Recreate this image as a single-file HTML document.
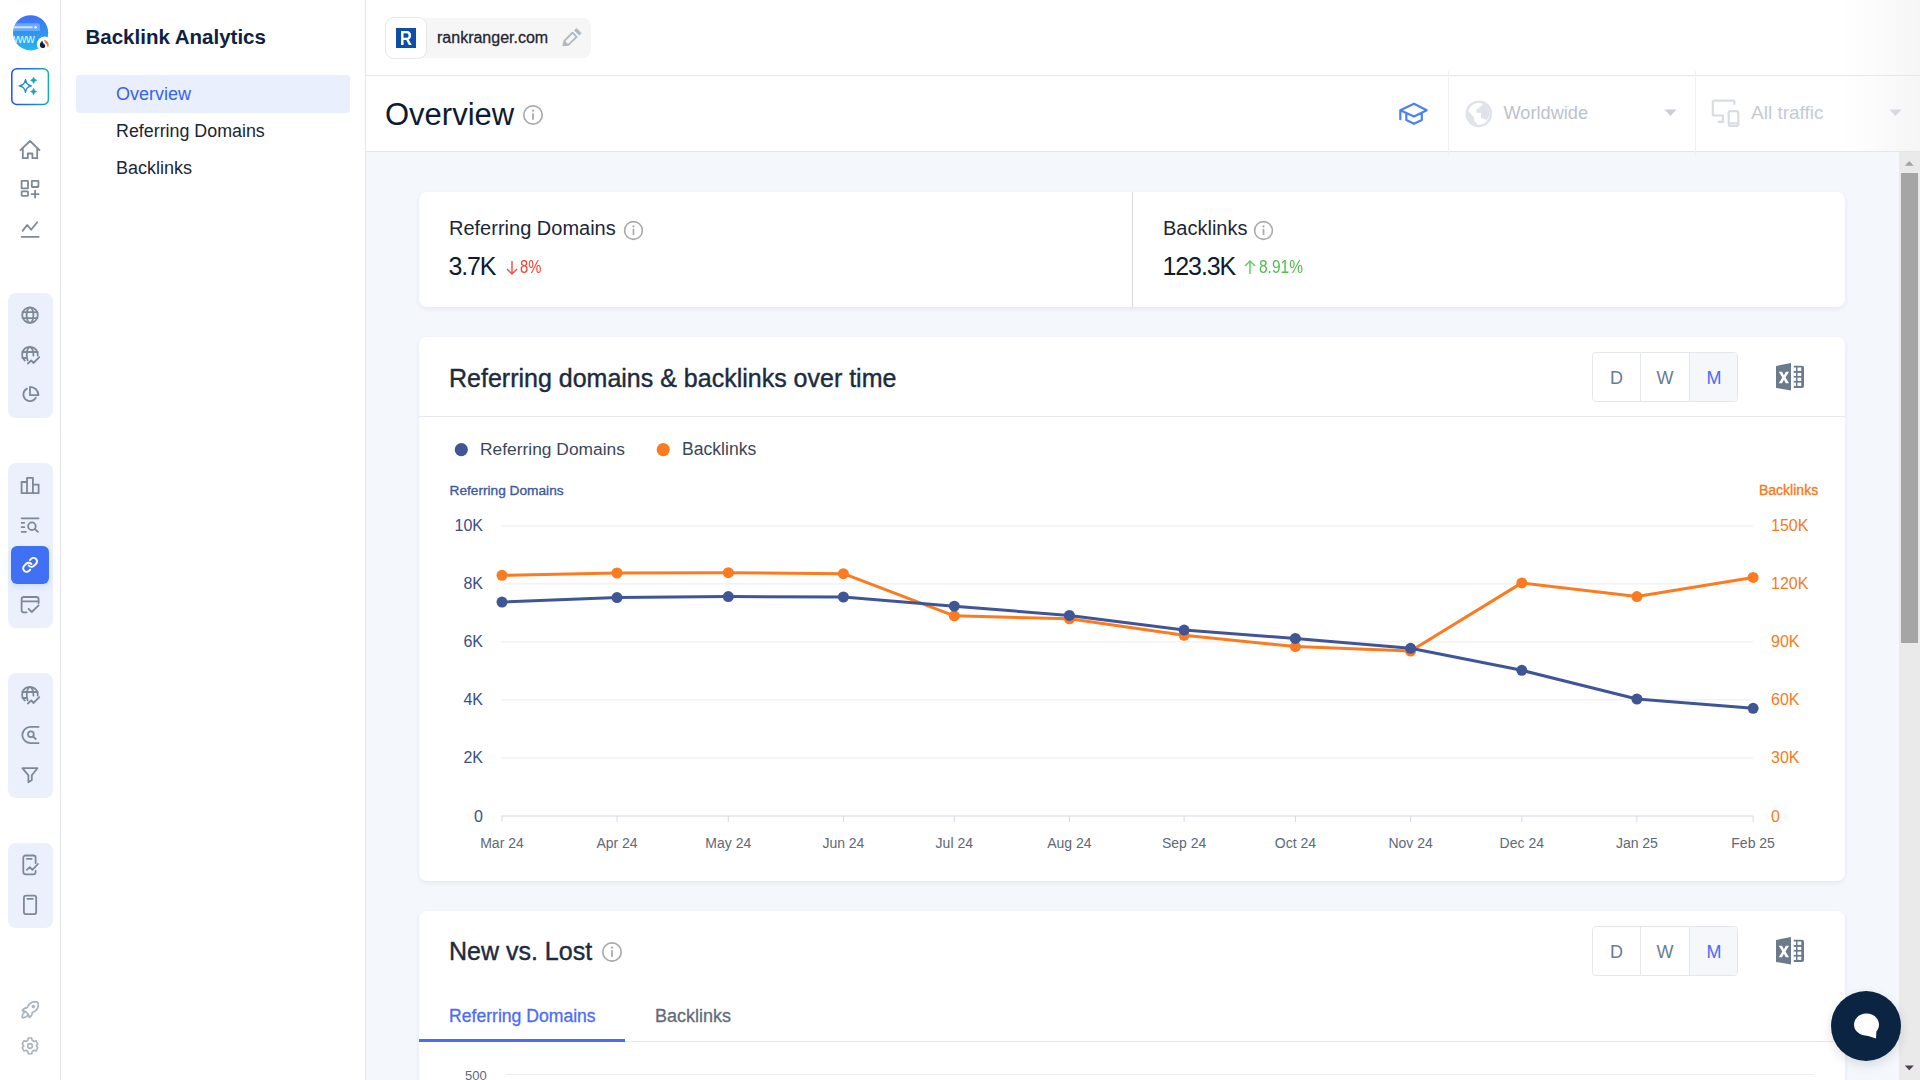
<!DOCTYPE html>
<html><head><meta charset="utf-8">
<style>
*{box-sizing:border-box;margin:0;padding:0}
html,body{width:1920px;height:1080px;overflow:hidden;background:#fff;font-family:"Liberation Sans",sans-serif;}
.abs{position:absolute}
#rail{position:absolute;left:0;top:0;width:61px;height:1080px;background:#fff;border-right:1px solid #e3e6eb}
#subnav{position:absolute;left:61px;top:0;width:305px;height:1080px;background:#fff;border-right:1px solid #e3e6eb}
#hdr{position:absolute;left:366px;top:0;width:1554px;height:76px;background:#fff;border-bottom:1px solid #e3e6eb}
#bar{position:absolute;left:366px;top:76px;width:1554px;height:76px;background:#fff;border-bottom:1px solid #e3e6eb}
#content{position:absolute;left:366px;top:152px;width:1554px;height:928px;background:#f4f7fc}
.card{position:absolute;background:#fff;border-radius:8px;box-shadow:0 2px 5px rgba(30,50,110,0.08)}
.grp{position:absolute;left:8px;width:45px;background:#ebf0fc;border-radius:8px}
.ic{position:absolute;left:20px;width:20px;height:20px}
.t{position:absolute;white-space:nowrap}
</style></head>
<body>
<div id="rail"></div>
<div id="subnav"></div>
<div id="hdr"></div>
<div id="bar"></div>
<div id="content"></div>

<div class="abs" style="left:1840px;top:0;width:80px;height:151px;background:linear-gradient(90deg,rgba(235,235,235,0) 0%,rgba(235,235,235,0.45) 100%)"></div>
<!-- rail groups -->
<div class="grp" style="top:293px;height:125px"></div>
<div class="grp" style="top:463px;height:165px"></div>
<div class="grp" style="top:673px;height:125px"></div>
<div class="grp" style="top:843px;height:85px"></div>
<div class="abs" style="left:11px;top:546px;width:38px;height:38px;background:#4071f4;border-radius:6px;box-shadow:0 3px 6px rgba(64,113,244,0.15)"></div>

<!--RAIL-->
<svg class="abs" style="left:0;top:0" width="61" height="1080">
<defs>
<linearGradient id="avg" x1="0" y1="0" x2="0" y2="1"><stop offset="0" stop-color="#4070f6"/><stop offset="1" stop-color="#20b9ea"/></linearGradient>
<linearGradient id="aib" x1="0" y1="0" x2="1" y2="0"><stop offset="0" stop-color="#1e4dff"/><stop offset="1" stop-color="#12aeb0"/></linearGradient>
</defs>
<!-- avatar -->
<clipPath id="avc"><circle cx="30.6" cy="32.8" r="17.6"/></clipPath>
<circle cx="30.6" cy="32.8" r="17.6" fill="url(#avg)"/>
<g clip-path="url(#avc)">
<path d="M10 31 V25.5 a2.2 2.2 0 0 1 2.2 -2.2 H37.7 a2.2 2.2 0 0 1 2.2 2.2 V31 Z" fill="#9ccaff" opacity="0.5"/>
<rect x="13" y="26.3" width="20" height="2" rx="1" fill="#eef5ff" opacity="0.75"/>
<circle cx="35.6" cy="27.2" r="1.3" fill="#fff" opacity="0.9"/>
<text x="9.5" y="43" font-size="12" fill="#e6f4ff" font-family="Liberation Sans" letter-spacing="-0.4">www</text>
</g>
<circle cx="44.5" cy="44.3" r="7.7" fill="#fff" style="filter:drop-shadow(0 0.5px 1px rgba(0,0,0,0.12))"/>
<path d="M42.3 40.5 c-1.6 1.4 -2.8 3.3 -2.3 5.4 c0.5 2 3.2 2.6 4.6 1.5 c1.1 -0.9 0.8 -2.3 -0.2 -3.2 c-1.2 -1.1 -2 -1.9 -2.1 -3.7z" fill="#0e2340"/>
<path d="M44 39.8 c2 0.3 3.9 1.7 4.5 3.7 c0.5 1.7 0 3.4 -1 4.3 c0.2 -1.4 -0.3 -2.8 -1.3 -4 c-0.8 -0.9 -2 -2 -2.2 -4z" fill="#fb7a1e"/>
<!-- AI button -->
<rect x="11.8" y="68.8" width="36.6" height="35.6" rx="5" fill="#fff" stroke="url(#aib)" stroke-width="1.5"/>
<path d="M25.5 79.6 Q26.3 85.1 31.3 85.9 Q26.3 86.7 25.5 92.2 Q24.7 86.7 19.2 85.9 Q24.7 85.1 25.5 79.6Z" fill="none" stroke="#1a8ad0" stroke-width="1.4" stroke-linejoin="round"/>
<path d="M33.6 77.2 Q34 79.9 36.6 80.3 Q34 80.7 33.6 83.4 Q33.2 80.7 30.6 80.3 Q33.2 79.9 33.6 77.2Z" fill="#14a6b4" stroke="#14a6b4" stroke-width="0.8" stroke-linejoin="round"/>
<path d="M33.6 88.5 Q34 91.2 36.6 91.6 Q34 92 33.6 94.7 Q33.2 92 30.6 91.6 Q33.2 91.2 33.6 88.5Z" fill="#14a6b4" stroke="#14a6b4" stroke-width="0.8" stroke-linejoin="round"/>
<g fill="none" stroke="#7d8995" stroke-width="1.8" stroke-linecap="round" stroke-linejoin="round">
<!-- home -->
<path d="M20.5 150.2 L30 141 L39.5 150.2 M22.8 148 V158.2 H27.8 V153.5 H32.4 V158.2 H37.2 V148"/>
<!-- grid plus -->
<rect x="21.6" y="180.8" width="6.4" height="7.6" rx="0.5"/>
<rect x="31.8" y="180.8" width="6.6" height="6.2" rx="0.5"/>
<rect x="21.6" y="191.4" width="6.4" height="4.4" rx="0.5"/>
<path d="M35.1 190.6 V197.6 M31.6 194.2 H38.6"/>
<!-- line chart -->
<path d="M22.6 230.9 L27.2 225 L31.1 229.7 L37.2 222.2 M21.6 236.9 H38.6"/>
<!-- globe -->
<circle cx="30" cy="315.1" r="7.8"/>
<ellipse cx="30" cy="315.1" rx="3.4" ry="7.8"/>
<path d="M22.6 312.2 H37.4 M22.6 318.1 H37.4"/>
<!-- globe trend -->
<path d="M24.8 360.5 A7.8 7.8 0 1 1 37.7 355.6"/>
<path d="M30 347.2 A3.4 7.8 0 0 0 27.6 360.3 M30 347.2 A3.4 7.8 0 0 1 33.4 355.6 M22.4 352 H37.6 M22.4 358 H26.6"/>
<path d="M27.9 363.5 L31.3 360.4 L33.4 363 L39.3 357.2"/>
<!-- pie -->
<path d="M27 388.6 A6.6 6.6 0 1 0 35.8 397.6"/>
<path d="M30 386.8 V395.2 H38.4 A8.4 8.4 0 0 0 30 386.8 Z"/>
<!-- bar chart -->
<path d="M21.6 493.2 V482 H27 V493.2 M27 493.2 V477.8 H32.9 V493.2 M32.9 484.6 H38.6 V493.2 H21.6"/>
<!-- list search -->
<path d="M21.6 518.3 H38.6 M21.6 522.8 H24.2 M21.6 527.2 H24.2 M21.6 531.8 H26"/>
<circle cx="31.9" cy="526.2" r="3.8"/>
<path d="M34.8 529 L38 531.9"/>
<!-- calendar check -->
<path d="M26.6 612.4 H23.8 A2.2 2.2 0 0 1 21.6 610.2 V599.2 A2.2 2.2 0 0 1 23.8 597 H36.4 A2.2 2.2 0 0 1 38.6 599.2 V603.2 M21.6 601.3 H38.6 M28.6 608.8 L31.8 612 L38.6 605.4"/>
<!-- globe trend 2 -->
<path d="M24.8 700.5 A7.8 7.8 0 1 1 37.7 695.6"/>
<path d="M30 687.2 A3.4 7.8 0 0 0 27.6 700.3 M30 687.2 A3.4 7.8 0 0 1 33.4 695.6 M22.4 692 H37.6 M22.4 698 H26.6"/>
<path d="M27.9 703.5 L31.3 700.4 L33.4 703 L39.3 697.2"/>
<!-- search C -->
<path d="M38.6 726.9 H30.4 A8.1 8.1 0 0 0 30.4 743.1 H38.6"/>
<circle cx="30.9" cy="734.3" r="2.9"/>
<path d="M33 736.5 L35.8 739"/>
<!-- funnel -->
<path d="M22.4 768.2 H37.4 L31.8 775.3 V780 L28.4 782.3 V775.3 Z"/>
<!-- phone chart -->
<path d="M35.6 863 V857.7 A2.2 2.2 0 0 0 33.4 855.5 H25.5 A2.2 2.2 0 0 0 23.3 857.7 V872.1 A2.2 2.2 0 0 0 25.5 874.3 H33.4 A2.2 2.2 0 0 0 35.6 872.1 V871 M26.9 858.8 H31.7"/>
<path d="M26.9 869.8 L29.8 867.2 L32.4 869.8 L37.9 864"/>
<!-- phone -->
<rect x="23.9" y="895.7" width="12.3" height="18.5" rx="2.2"/>
<path d="M27.4 898.8 H32.8"/>
</g>
<!-- active link icon -->
<g fill="none" stroke="#fff" stroke-width="2.7" stroke-linecap="round" stroke-linejoin="round" transform="translate(30.1 564.8) scale(0.7) translate(-12 -12)">
<path d="M10 13a5 5 0 0 0 7.54.54l3-3a5 5 0 0 0-7.07-7.07l-1.72 1.71"/>
<path d="M14 11a5 5 0 0 0-7.54-.54l-3 3a5 5 0 0 0 7.07 7.07l1.71-1.71"/>
</g>
<g fill="none" stroke="#a8b3be" stroke-width="1.6" stroke-linecap="round" stroke-linejoin="round">
<!-- rocket (tabler-like) -->
<g transform="translate(18.3 997.6) scale(1.0)">
<path d="M4 13a8 8 0 0 1 7 7a6 6 0 0 0 3 -5a9 9 0 0 0 6 -8a3 3 0 0 0 -3 -3a9 9 0 0 0 -8 6a6 6 0 0 0 -5 3"/>
<path d="M7 14a6 6 0 0 0 -3 6a6 6 0 0 0 6 -3"/>
<circle cx="15" cy="9" r="1"/>
</g>
<!-- gear -->
<path vector-effect="non-scaling-stroke" transform="translate(30 1045.9) scale(0.84 0.95) translate(-30 -1045.9)" d="M28 1037.6 H32 L32.6 1040 L34.9 1041.3 L37.3 1040.6 L39.3 1044 L37.5 1045.8 L37.5 1046 L39.3 1047.8 L37.3 1051.2 L34.9 1050.5 L32.6 1051.8 L32 1054.2 H28 L27.4 1051.8 L25.1 1050.5 L22.7 1051.2 L20.7 1047.8 L22.5 1046 L22.5 1045.8 L20.7 1044 L22.7 1040.6 L25.1 1041.3 L27.4 1040 Z"/>
<circle cx="30" cy="1045.9" r="2.3"/>
</g>
</svg>

<!--/RAIL-->
<!-- subnav -->
<div class="t" style="left:85.5px;top:25.2px;font-size:20.5px;font-weight:bold;color:#0f2140">Backlink Analytics</div>
<div class="abs" style="left:76px;top:75px;width:274px;height:38px;background:#e9effd;border-radius:4px"></div>
<div class="t" style="left:116px;top:83.5px;font-size:18px;color:#3562f0">Overview</div>
<div class="t" style="left:116px;top:120.5px;font-size:17.85px;color:#1b2536">Referring Domains</div>
<div class="t" style="left:116px;top:158px;font-size:18px;color:#1b2536">Backlinks</div>

<!-- header chip -->
<div class="abs" style="left:385px;top:18px;width:206px;height:40px;background:#f6f6f7;border-radius:8px"></div>
<div class="abs" style="left:385px;top:17px;width:42px;height:42px;background:#fff;border:1px solid #e6e8ec;border-radius:9px"></div>
<div class="abs" style="left:396px;top:28px;width:20px;height:20px;background:#0d4ea6"></div><div class="abs" style="left:396px;top:28px;width:20px;height:20px;color:#fff;font-weight:bold;font-size:19.5px;line-height:21px;text-align:center;transform:scaleX(0.85)">R</div>
<div class="t" style="left:437px;top:28.5px;font-size:16px;color:#1f2633;-webkit-text-stroke:0.3px #1f2633">rankranger.com</div>

<!-- overview bar -->
<div class="t" style="left:385px;top:96.5px;font-size:31px;color:#0d1b34">Overview</div>


<!-- pencil -->
<svg class="abs" style="left:560px;top:26px" width="24" height="24" viewBox="560 26 24 24">
<path d="M563.4 45.3 L564.6 40.6 L572.5 32.7 L576.6 36.8 L568.7 44.7 Z" fill="none" stroke="#b0b8c2" stroke-width="1.9" stroke-linejoin="round"/>
<path d="M563.4 45.3 L564.6 40.6 L568.7 44.7 Z" fill="#b0b8c2"/>
<path d="M575.2 30.4 L576.5 29.1 L580.6 33.2 L579.3 34.5 Z" fill="#b0b8c2" stroke="#b0b8c2" stroke-width="1.6" stroke-linejoin="round"/>
</svg>
<!-- overview info -->
<svg class="abs" style="left:522px;top:104px" width="22" height="22" viewBox="0 0 22 22">
<circle cx="11" cy="11" r="9.2" fill="none" stroke="#a9a9a9" stroke-width="1.7"/>
<rect x="10.1" y="9.2" width="1.8" height="6.6" fill="#a9a9a9"/><circle cx="11" cy="6.7" r="1.1" fill="#a9a9a9"/>
</svg>
<!-- right header controls -->
<svg class="abs" style="left:1396px;top:100px" width="34" height="28" viewBox="1396 100 34 28">
<path d="M1400.3 110.3 L1414 103.8 L1426.7 110.3 L1414 116.6 Z M1400.3 110.3 V119.2 M1406.3 113.3 V120 L1414 123.8 L1421.8 120 V113.3" fill="none" stroke="#4a82f6" stroke-width="2.2" stroke-linejoin="round" stroke-linecap="round"/>
</svg>
<div class="abs" style="left:1448px;top:71px;width:1px;height:85px;background:#eff1f4"></div>
<div class="abs" style="left:1695px;top:71px;width:1px;height:85px;background:#f0f1f4"></div>
<svg class="abs" style="left:1464px;top:99px" width="30" height="30" viewBox="0 0 30 30">
<circle cx="14.8" cy="14.8" r="12.1" fill="none" stroke="#dfe3e9" stroke-width="2.5"/>
<path d="M19.6 4.3 L16.8 7.6 L15.5 7.6 L15.2 9.6 L12.6 10 L12.2 13.6 L17 14.1 L17 19.3 L20 19.7 L22.6 21.2 A10.9 10.9 0 0 0 19.6 4.3 Z" fill="#dfe3e9"/>
<path d="M4.2 12.2 L9.6 17.8 L10.6 22.6 L12.6 24.1 L13.4 25.8 A10.9 10.9 0 0 1 4.2 12.2 Z" fill="#dfe3e9"/>
</svg>
<div class="t" style="left:1503.5px;top:102.5px;font-size:18.2px;color:#bcc2cb">Worldwide</div>
<svg class="abs" style="left:1663px;top:108px" width="16" height="10" viewBox="0 0 16 10"><path d="M1.5 1.5 H13.5 L7.5 8 Z" fill="#c9ced6"/></svg>
<svg class="abs" style="left:1708px;top:96px" width="36" height="36" viewBox="1708 96 36 36">
<path d="M1734.3 104.8 V101.8 A1.2 1.2 0 0 0 1733.1 100.6 H1714 A1.2 1.2 0 0 0 1712.8 101.8 V114.3 A1.2 1.2 0 0 0 1714 115.5 H1722.8 V121.9 H1717.6" fill="none" stroke="#d8dce3" stroke-width="2.2"/>
<rect x="1728.7" y="111.1" width="9.6" height="14.8" rx="1.8" fill="none" stroke="#d8dce3" stroke-width="2.2"/>
<path d="M1729 123.3 H1738" stroke="#d8dce3" stroke-width="2"/>
</svg>
<div class="t" style="left:1751px;top:102px;font-size:19px;color:#c5cad2">All traffic</div>
<svg class="abs" style="left:1888px;top:108px" width="16" height="10" viewBox="0 0 16 10"><path d="M1.5 1.5 H13.5 L7.5 8 Z" fill="#d5dae2"/></svg>

<!-- stats card -->
<div class="card" style="left:419px;top:192px;width:1426px;height:115px"></div>
<div class="abs" style="left:1132px;top:192px;width:1px;height:115px;background:#d5d8de"></div>
<div class="t" style="left:449px;top:217px;font-size:20px;color:#1b2638">Referring Domains</div>
<div class="t" style="left:448.5px;top:252px;font-size:25px;letter-spacing:-1.2px;color:#0d1b2e">3.7K</div>
<div class="t" style="left:1163px;top:217px;font-size:20px;color:#1b2638">Backlinks</div>
<div class="t" style="left:1162.5px;top:252px;font-size:25px;letter-spacing:-1.1px;color:#0d1b2e">123.3K</div>


<svg class="abs" style="left:623px;top:220px" width="21" height="21" viewBox="0 0 21 21">
<circle cx="10.5" cy="10.5" r="8.9" fill="none" stroke="#a9a9a9" stroke-width="1.6"/>
<rect x="9.65" y="8.8" width="1.7" height="6.2" fill="#a9a9a9"/><circle cx="10.5" cy="6.4" r="1.05" fill="#a9a9a9"/>
</svg>
<svg class="abs" style="left:1253px;top:220px" width="21" height="21" viewBox="0 0 21 21">
<circle cx="10.5" cy="10.5" r="8.9" fill="none" stroke="#a9a9a9" stroke-width="1.6"/>
<rect x="9.65" y="8.8" width="1.7" height="6.2" fill="#a9a9a9"/><circle cx="10.5" cy="6.4" r="1.05" fill="#a9a9a9"/>
</svg>
<svg class="abs" style="left:505px;top:258.5px" width="14" height="17" viewBox="0 0 14 17">
<path d="M7 2 V15 M2 10 L7 15 L12 10" fill="none" stroke="#f5564a" stroke-width="1.5"/>
</svg>
<div class="t" style="left:519.5px;top:256.5px;font-size:18px;color:#f43f2e;transform:scaleX(0.82);transform-origin:0 0">8%</div>
<svg class="abs" style="left:1243px;top:258.5px" width="14" height="17" viewBox="0 0 14 17">
<path d="M7 15 V2 M2 7 L7 2 L12 7" fill="none" stroke="#6acb66" stroke-width="1.5"/>
</svg>
<div class="t" style="left:1258.5px;top:256.5px;font-size:18px;color:#4fbd4b;transform:scaleX(0.86);transform-origin:0 0">8.91%</div>

<!-- chart card -->
<div class="card" style="left:419px;top:337px;width:1426px;height:544px"></div>
<div class="abs" style="left:419px;top:416px;width:1426px;height:1px;background:#e5e8ec"></div>
<div class="t" style="left:449px;top:364px;font-size:25px;color:#1d2b3e;-webkit-text-stroke:0.4px #1d2b3e">Referring domains &amp; backlinks over time</div>


<div class="abs" style="left:1592px;top:352px;width:146px;height:50px;border:1px solid #e4e7ec;border-radius:4px;background:#fff;overflow:hidden">
 <div class="abs" style="left:97px;top:0;width:48px;height:48px;background:#f5f7fb"></div>
 <div class="abs" style="left:47px;top:0;width:1px;height:48px;background:#e4e7ec"></div>
 <div class="abs" style="left:96px;top:0;width:1px;height:48px;background:#e4e7ec"></div>
 <div class="t" style="left:0;width:47px;top:15px;text-align:center;font-size:18px;color:#6b7b95">D</div>
 <div class="t" style="left:48px;width:48px;top:15px;text-align:center;font-size:18px;color:#6b7b95">W</div>
 <div class="t" style="left:97px;width:48px;top:15px;text-align:center;font-size:18px;color:#4a6cf7">M</div>
</div>
<svg class="abs" style="left:1774px;top:361px" width="32" height="32" viewBox="0 0 32 32">
<path d="M2 5 L17 2.1 V29.6 L2 26.9 Z" fill="#6b7b8c"/>
<path d="M4.8 10.7 H8 L9.9 14.3 L11.8 10.7 H15 L11.5 16.5 L15 22.3 H11.8 L9.9 18.7 L8 22.3 H4.8 L8.3 16.5 Z" fill="#fff"/>
<path d="M19.75 4.8 H28 A2 2 0 0 1 30 6.8 V24.9 A2 2 0 0 1 28 26.9 H19.75 Z" fill="#6b7b8c"/>
<g fill="#fff"><rect x="19.5" y="6.5" width="2.5" height="3.4"/><rect x="19.5" y="11.9" width="2.5" height="3"/><rect x="19.5" y="16.6" width="2.5" height="3.3"/><rect x="19.5" y="21.6" width="2.5" height="3.3"/>
<rect x="23.5" y="6.5" width="3.75" height="3.4"/><rect x="23.5" y="11.9" width="3.75" height="3"/><rect x="23.5" y="16.6" width="3.75" height="3.3"/><rect x="23.5" y="21.6" width="3.75" height="3.3"/></g>
</svg>
<svg class="abs" style="left:450px;top:440px" width="340" height="20" viewBox="450 440 340 20">
<circle cx="461.3" cy="449.7" r="6.6" fill="#3f5596"/>
<circle cx="663.2" cy="449.7" r="6.6" fill="#fd7b1f"/>
</svg>
<div class="t" style="left:480px;top:438.5px;font-size:17.4px;color:#3b4759">Referring Domains</div>
<div class="t" style="left:682px;top:439px;font-size:17.6px;color:#3b4759">Backlinks</div>
<div class="t" style="left:449.5px;top:482.5px;font-size:13.7px;color:#3d5a9e;-webkit-text-stroke:0.35px #3d5a9e">Referring Domains</div>
<div class="t" style="left:1759px;top:482px;font-size:14px;color:#f47a20;-webkit-text-stroke:0.35px #f47a20">Backlinks</div>

<!--CHART-->
<svg class="abs" style="left:0;top:0" width="1920" height="1080">
<line x1="501" x2="1753" y1="525.9" y2="525.9" stroke="#ebebeb" stroke-width="1"/>
<line x1="501" x2="1753" y1="583.9" y2="583.9" stroke="#ebebeb" stroke-width="1"/>
<line x1="501" x2="1753" y1="641.9" y2="641.9" stroke="#ebebeb" stroke-width="1"/>
<line x1="501" x2="1753" y1="699.9" y2="699.9" stroke="#ebebeb" stroke-width="1"/>
<line x1="501" x2="1753" y1="757.9" y2="757.9" stroke="#ebebeb" stroke-width="1"/>
<line x1="501" x2="1753" y1="816" y2="816" stroke="#d5d9df" stroke-width="1"/>
<line x1="502" x2="502" y1="816" y2="822" stroke="#d5d9df" stroke-width="1"/>
<line x1="617" x2="617" y1="816" y2="822" stroke="#d5d9df" stroke-width="1"/>
<line x1="728.3" x2="728.3" y1="816" y2="822" stroke="#d5d9df" stroke-width="1"/>
<line x1="843.4" x2="843.4" y1="816" y2="822" stroke="#d5d9df" stroke-width="1"/>
<line x1="954.3" x2="954.3" y1="816" y2="822" stroke="#d5d9df" stroke-width="1"/>
<line x1="1069.4" x2="1069.4" y1="816" y2="822" stroke="#d5d9df" stroke-width="1"/>
<line x1="1184.1" x2="1184.1" y1="816" y2="822" stroke="#d5d9df" stroke-width="1"/>
<line x1="1295.4" x2="1295.4" y1="816" y2="822" stroke="#d5d9df" stroke-width="1"/>
<line x1="1410.6" x2="1410.6" y1="816" y2="822" stroke="#d5d9df" stroke-width="1"/>
<line x1="1521.8" x2="1521.8" y1="816" y2="822" stroke="#d5d9df" stroke-width="1"/>
<line x1="1636.9" x2="1636.9" y1="816" y2="822" stroke="#d5d9df" stroke-width="1"/>
<line x1="1753.1" x2="1753.1" y1="816" y2="822" stroke="#d5d9df" stroke-width="1"/>
<text x="483" y="531.4" text-anchor="end" font-size="16" fill="#3b4e86">10K</text>
<text x="1771" y="531.4" font-size="16" fill="#f47b20">150K</text>
<text x="483" y="589.4" text-anchor="end" font-size="16" fill="#3b4e86">8K</text>
<text x="1771" y="589.4" font-size="16" fill="#f47b20">120K</text>
<text x="483" y="647.4" text-anchor="end" font-size="16" fill="#3b4e86">6K</text>
<text x="1771" y="647.4" font-size="16" fill="#f47b20">90K</text>
<text x="483" y="705.4" text-anchor="end" font-size="16" fill="#3b4e86">4K</text>
<text x="1771" y="705.4" font-size="16" fill="#f47b20">60K</text>
<text x="483" y="763.4" text-anchor="end" font-size="16" fill="#3b4e86">2K</text>
<text x="1771" y="763.4" font-size="16" fill="#f47b20">30K</text>
<text x="483" y="821.5" text-anchor="end" font-size="16" fill="#3b4e86">0</text>
<text x="1771" y="821.5" font-size="16" fill="#f47b20">0</text>
<text x="502" y="848" text-anchor="middle" font-size="14" fill="#5d6878">Mar 24</text>
<text x="617" y="848" text-anchor="middle" font-size="14" fill="#5d6878">Apr 24</text>
<text x="728.3" y="848" text-anchor="middle" font-size="14" fill="#5d6878">May 24</text>
<text x="843.4" y="848" text-anchor="middle" font-size="14" fill="#5d6878">Jun 24</text>
<text x="954.3" y="848" text-anchor="middle" font-size="14" fill="#5d6878">Jul 24</text>
<text x="1069.4" y="848" text-anchor="middle" font-size="14" fill="#5d6878">Aug 24</text>
<text x="1184.1" y="848" text-anchor="middle" font-size="14" fill="#5d6878">Sep 24</text>
<text x="1295.4" y="848" text-anchor="middle" font-size="14" fill="#5d6878">Oct 24</text>
<text x="1410.6" y="848" text-anchor="middle" font-size="14" fill="#5d6878">Nov 24</text>
<text x="1521.8" y="848" text-anchor="middle" font-size="14" fill="#5d6878">Dec 24</text>
<text x="1636.9" y="848" text-anchor="middle" font-size="14" fill="#5d6878">Jan 25</text>
<text x="1753.1" y="848" text-anchor="middle" font-size="14" fill="#5d6878">Feb 25</text>
<path d="M502,575.3 L617,573.0 L728.3,572.7 L843.4,573.7 L954.3,615.8 L1069.4,618.8 L1184.1,635.3 L1295.4,646.6 L1410.6,651.0 L1521.8,582.9 L1636.9,596.6 L1753.1,577.4" fill="none" stroke="#fd7b1f" stroke-width="3" stroke-linejoin="round"/>
<circle cx="502" cy="575.3" r="5.5" fill="#fd7b1f"/>
<circle cx="617" cy="573.0" r="5.5" fill="#fd7b1f"/>
<circle cx="728.3" cy="572.7" r="5.5" fill="#fd7b1f"/>
<circle cx="843.4" cy="573.7" r="5.5" fill="#fd7b1f"/>
<circle cx="954.3" cy="615.8" r="5.5" fill="#fd7b1f"/>
<circle cx="1069.4" cy="618.8" r="5.5" fill="#fd7b1f"/>
<circle cx="1184.1" cy="635.3" r="5.5" fill="#fd7b1f"/>
<circle cx="1295.4" cy="646.6" r="5.5" fill="#fd7b1f"/>
<circle cx="1410.6" cy="651.0" r="5.5" fill="#fd7b1f"/>
<circle cx="1521.8" cy="582.9" r="5.5" fill="#fd7b1f"/>
<circle cx="1636.9" cy="596.6" r="5.5" fill="#fd7b1f"/>
<circle cx="1753.1" cy="577.4" r="5.5" fill="#fd7b1f"/>
<path d="M502,602.1 L617,597.6 L728.3,596.6 L843.4,597.0 L954.3,606.2 L1069.4,615.4 L1184.1,630.1 L1295.4,638.4 L1410.6,648.3 L1521.8,670.3 L1636.9,699.0 L1753.1,708.3" fill="none" stroke="#3f5596" stroke-width="3" stroke-linejoin="round"/>
<circle cx="502" cy="602.1" r="5.5" fill="#3f5596"/>
<circle cx="617" cy="597.6" r="5.5" fill="#3f5596"/>
<circle cx="728.3" cy="596.6" r="5.5" fill="#3f5596"/>
<circle cx="843.4" cy="597.0" r="5.5" fill="#3f5596"/>
<circle cx="954.3" cy="606.2" r="5.5" fill="#3f5596"/>
<circle cx="1069.4" cy="615.4" r="5.5" fill="#3f5596"/>
<circle cx="1184.1" cy="630.1" r="5.5" fill="#3f5596"/>
<circle cx="1295.4" cy="638.4" r="5.5" fill="#3f5596"/>
<circle cx="1410.6" cy="648.3" r="5.5" fill="#3f5596"/>
<circle cx="1521.8" cy="670.3" r="5.5" fill="#3f5596"/>
<circle cx="1636.9" cy="699.0" r="5.5" fill="#3f5596"/>
<circle cx="1753.1" cy="708.3" r="5.5" fill="#3f5596"/>
</svg>
<!--/CHART-->
<!-- new vs lost card -->
<div class="card" style="left:419px;top:911px;width:1426px;height:200px"></div>
<div class="t" style="left:449px;top:937px;font-size:25px;color:#1d2b3e;-webkit-text-stroke:0.4px #1d2b3e">New vs. Lost</div>


<svg class="abs" style="left:601px;top:941px" width="22" height="22" viewBox="0 0 22 22">
<circle cx="11" cy="11" r="9.2" fill="none" stroke="#a9a9a9" stroke-width="1.7"/>
<rect x="10.1" y="9.2" width="1.8" height="6.6" fill="#a9a9a9"/><circle cx="11" cy="6.7" r="1.1" fill="#a9a9a9"/>
</svg>
<div class="abs" style="left:1592px;top:926px;width:146px;height:50px;border:1px solid #e4e7ec;border-radius:4px;background:#fff;overflow:hidden">
 <div class="abs" style="left:97px;top:0;width:48px;height:48px;background:#f5f7fb"></div>
 <div class="abs" style="left:47px;top:0;width:1px;height:48px;background:#e4e7ec"></div>
 <div class="abs" style="left:96px;top:0;width:1px;height:48px;background:#e4e7ec"></div>
 <div class="t" style="left:0;width:47px;top:15px;text-align:center;font-size:18px;color:#6b7b95">D</div>
 <div class="t" style="left:48px;width:48px;top:15px;text-align:center;font-size:18px;color:#6b7b95">W</div>
 <div class="t" style="left:97px;width:48px;top:15px;text-align:center;font-size:18px;color:#4a6cf7">M</div>
</div>
<svg class="abs" style="left:1774px;top:935px" width="32" height="32" viewBox="0 0 32 32">
<path d="M2 5 L17 2.1 V29.6 L2 26.9 Z" fill="#6b7b8c"/>
<path d="M4.8 10.7 H8 L9.9 14.3 L11.8 10.7 H15 L11.5 16.5 L15 22.3 H11.8 L9.9 18.7 L8 22.3 H4.8 L8.3 16.5 Z" fill="#fff"/>
<path d="M19.75 4.8 H28 A2 2 0 0 1 30 6.8 V24.9 A2 2 0 0 1 28 26.9 H19.75 Z" fill="#6b7b8c"/>
<g fill="#fff"><rect x="19.5" y="6.5" width="2.5" height="3.4"/><rect x="19.5" y="11.9" width="2.5" height="3"/><rect x="19.5" y="16.6" width="2.5" height="3.3"/><rect x="19.5" y="21.6" width="2.5" height="3.3"/>
<rect x="23.5" y="6.5" width="3.75" height="3.4"/><rect x="23.5" y="11.9" width="3.75" height="3"/><rect x="23.5" y="16.6" width="3.75" height="3.3"/><rect x="23.5" y="21.6" width="3.75" height="3.3"/></g>
</svg>
<div class="abs" style="left:419px;top:1041px;width:1426px;height:1px;background:#e5e8ec"></div>
<div class="abs" style="left:419px;top:1038.5px;width:206px;height:3px;background:#4a6cf7"></div>
<div class="t" style="left:449px;top:1006px;font-size:17.6px;color:#4a6cf7;-webkit-text-stroke:0.3px #4a6cf7">Referring Domains</div>
<div class="t" style="left:655px;top:1006px;font-size:18px;color:#5f6b7a;-webkit-text-stroke:0.3px #5f6b7a">Backlinks</div>
<div class="t" style="left:465px;top:1068px;font-size:13px;color:#5d6878">500</div>
<div class="abs" style="left:506px;top:1074px;width:1307px;height:1px;background:#ebebeb"></div>
<!-- scrollbar -->
<div class="abs" style="left:1899px;top:152px;width:21px;height:928px;background:#eaeaea"></div>
<div class="abs" style="left:1901px;top:173px;width:17px;height:470px;background:#a5a5a5"></div>


<svg class="abs" style="left:1899px;top:152px" width="21" height="20" viewBox="0 0 21 20"><path d="M5.8 13.8 H14.8 L10.3 9 Z" fill="#a3a3a3"/></svg>
<svg class="abs" style="left:1899px;top:1060px" width="21" height="20" viewBox="0 0 21 20"><path d="M5.8 5.5 H14.8 L10.3 10.3 Z" fill="#4d3f4d"/></svg>


<!-- chat bubble -->
<div class="abs" style="left:1831px;top:991px;width:70px;height:70px;border-radius:50%;background:#0b2442;box-shadow:0 4px 12px rgba(0,0,0,0.12)"></div>
<svg class="abs" style="left:1846px;top:1008px" width="40" height="36" viewBox="0 0 40 36">
<path d="M20.5 5.6 C27.5 5.6 33 10.5 33 16.6 C33 19.6 32 21.8 30.4 23.6 L30 30.6 L22.2 28 C14 27.6 8 23.2 8 16.8 C8 10.5 13.5 5.6 20.5 5.6 Z" fill="#fff"/>
</svg>

</body></html>
